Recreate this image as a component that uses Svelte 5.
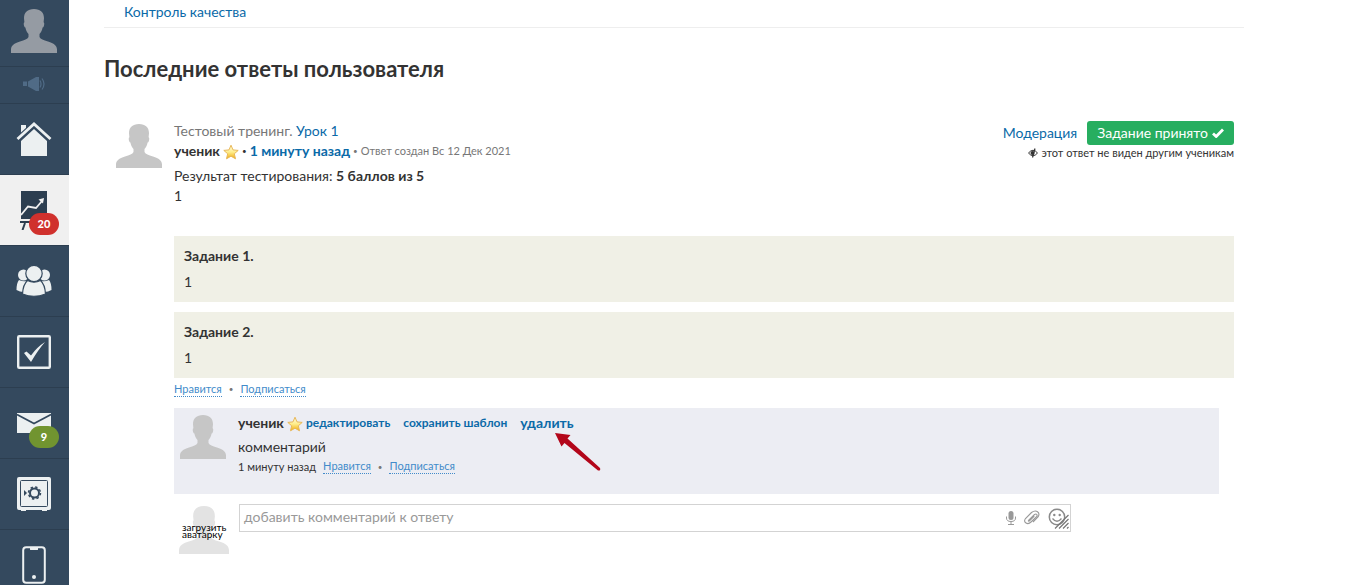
<script>
	const menu = [
		{ id: 'training', label: 'Тренинги', badge: 20, active: true },
		{ id: 'users', label: 'Ученики' },
		{ id: 'tasks', label: 'Задачи' },
		{ id: 'mail', label: 'Сообщения', badge: 9, green: true },
		{ id: 'safe', label: 'Продажи' },
		{ id: 'phone', label: 'Приложение' }
	];

	const tasks = [
		{ title: 'Задание 1.', answer: '1' },
		{ title: 'Задание 2.', answer: '1' }
	];

	let reply = $state('');
</script>

{#snippet person()}
	<svg class="person" viewBox="0 0 46 45" preserveAspectRatio="none" aria-hidden="true">
		<path d="M23 0c6.500 0 10 3.500 10 9.500l-.4 4c.9.300.8 2.500.2 4.200-.3.800-.7 1.200-1.200 1.300-.5 3-1.600 5-3.100 6.500v3.200c1 2.300 4 3.300 8.500 4.600 6 1.700 8.800 4.200 9 8.200V45H0v-3.500c.2-4 3-6.500 9-8.200 4.500-1.300 7.500-2.300 8.500-4.600v-3.200c-1.500-1.500-2.600-3.500-3.100-6.500-.5-.1-.9-.5-1.200-1.300-.6-1.700-.7-3.900.2-4.200l-.4-4C13 3.500 16.500 0 23 0z" />
	</svg>
{/snippet}

{#snippet star()}
	<svg class="star" viewBox="0 0 16 16" aria-hidden="true">
		<defs>
			<linearGradient id="gold" x1="0" y1="0" x2="0" y2="1">
				<stop offset="0" stop-color="#fffbe0" />
				<stop offset=".5" stop-color="#ffee8c" />
				<stop offset="1" stop-color="#efaa10" />
			</linearGradient>
		</defs>
		<path d="M8 1.200l2 4.700 5.200.5-3.900 3.400 1.200 5L8 12.200l-4.500 2.600 1.200-5L.8 6.400 6 5.900z" fill="url(#gold)" stroke="#e8b85a" stroke-linejoin="round" />
	</svg>
{/snippet}

<div class="page">
	<aside>
		<a class="profile" href="#profile" aria-label="Профиль">{@render person()}</a>
		<a class="news" href="#news" aria-label="Новости">
			<svg width="22" height="16" viewBox="0 0 22 16" fill="#506b86">
				<path d="M0 5.500h4v4.500H0zM5 5.500l8-4.500h3v14h-3l-8-4.500z" />
				<path d="M17 4.500q2 3.500 0 7M19 2.500q4 5.500 0 11" fill="none" stroke="#506b86" stroke-width="1.200" />
			</svg>
		</a>
		<a class="item" href="#home" aria-label="Главная">
			<svg width="36" height="36" viewBox="0 0 36 36" fill="#ecf0f1">
				<path d="M5 4h5v4l-5 5zM5 20L18 8l13 12v15H5z" />
				<path d="M1 18.500L18 3l17 15.500" fill="none" stroke="#34495e" stroke-width="5" />
				<path d="M1.500 18L18 3l16.500 15" fill="none" stroke="#ecf0f1" stroke-width="2.800" />
			</svg>
		</a>
		{#each menu as item}
			<a class="item" class:active={item.active} href={`#${item.id}`} aria-label={item.label}>
				{#if item.id === 'training'}
					<svg width="36" height="40" viewBox="0 0 36 40">
						<path d="M5 1h26v28H5zM4 31h28v2H4z" fill="#2c3e50" />
						<path d="M9 33l-2.500 7M27 33l2.500 7" stroke="#2c3e50" stroke-width="2" />
						<path d="M5 25l7-8.500 8 1.500 6-7" fill="none" stroke="#f0f0f0" stroke-width="1.800" />
						<path d="M28 8l-1 5.500-4.500-4z" fill="#f0f0f0" />
					</svg>
				{:else if item.id === 'users'}
					<svg width="36" height="32" viewBox="0 0 36 32" fill="#ecf0f1">
						<circle cx="7.500" cy="10" r="5.500" />
						<circle cx="28.500" cy="10" r="5.500" />
						<path d="M3 15q4 2 8 1L7.500 27Q4 27 .5 25 .5 18 3 15zM33 15q-4 2-8 1l3.500 11q3.500 0 7-2 0-7-2.500-10z" />
						<g stroke="#34495e" stroke-width="1.200">
							<circle cx="18" cy="8.500" r="8.200" />
							<path d="M11.500 15.500q6.500 3.500 13 0 4.500 4 5 13.500-11.500 4.500-23 0 .5-9.500 5-13.500z" />
						</g>
					</svg>
				{:else if item.id === 'tasks'}
					<svg width="34" height="34" viewBox="0 0 34 34">
						<rect x="1.200" y="1.200" width="31.600" height="31.600" rx="1" fill="none" stroke="#ecf0f1" stroke-width="2.400" />
						<path d="M7 18l2.500-1.500 4.500 4Q20 12 28 7q-7 8-14 20z" fill="#ecf0f1" />
					</svg>
				{:else if item.id === 'mail'}
					<svg class="mail" width="34" height="20" viewBox="0 0 34 20">
						<path d="M0 0h34v20H0z" fill="#ecf0f1" />
						<path d="M0 1.500l17 9 17-9" fill="none" stroke="#34495e" stroke-width="1.600" />
					</svg>
				{:else if item.id === 'safe'}
					<svg width="34" height="34" viewBox="0 0 34 34">
						<path d="M2 0h30q2 0 2 2v29q0 2-2 2h-2v1h-5v-1H9v1H4v-1H2q-2 0-2-2V2q0-2 2-2z" fill="#ecf0f1" />
						<g fill="none" stroke="#34495e">
							<rect x="3.500" y="3.500" width="27" height="26" rx="1" />
							<circle cx="17.500" cy="16" r="4.500" stroke-width="2" />
							<circle cx="17.500" cy="16" r="6" stroke-width="1.500" stroke-dasharray="2.400 2.300" />
						</g>
						<path d="M7 13l3 3-3 3z" fill="#34495e" />
					</svg>
				{:else}
					<svg width="24" height="38" viewBox="0 0 24 38">
						<rect x="1.200" y="1.200" width="21.600" height="35.600" rx="3" fill="none" stroke="#ecf0f1" stroke-width="2" />
						<path d="M8 1h8v2.500q0 .5-1 .5H9q-1 0-1-.5z" fill="#ecf0f1" />
						<circle cx="12" cy="31" r="2" fill="#ecf0f1" />
					</svg>
				{/if}
				{#if item.badge}
					<span class="badge" class:green={item.green}>{item.badge}</span>
				{/if}
			</a>
		{/each}
	</aside>

	<main>
		<nav class="tabs">
			<a href="#quality">Контроль качества</a>
		</nav>

		<h1>Последние ответы пользователя</h1>

		<article class="answer">
			<div class="avatar">{@render person()}</div>
			<div class="body">
				<header class="head">
					<div>
						<p class="lesson">Тестовый тренинг. <a href="#lesson">Урок 1</a></p>
						<p class="author">
							<b>ученик</b>{@render star()}<span class="dot">•</span>
							<a href="#answer"><b>1 минуту назад</b></a>
							<span class="dot grey">•</span>
							<small>Ответ создан Вс 12 Дек 2021</small>
						</p>
					</div>
					<div class="status">
						<div class="moderation">
							<a href="#moderation">Модерация</a>
							<button type="button">
								Задание принято
								<svg width="12" height="10" viewBox="0 0 12 10" aria-hidden="true">
									<path d="M1 5.500l3.200 3L11 1.500" fill="none" stroke="#fff" stroke-width="2.800" />
								</svg>
							</button>
						</div>
						<p class="hidden-note">
							<svg width="10" height="10" viewBox="0 0 10 10" aria-hidden="true">
								<path d="M.5 5Q5-.5 9.500 5 5 10.500.5 5z" fill="none" stroke="#333" />
								<circle cx="4.500" cy="5" r="2" fill="#333" />
								<path d="M7 .5L4.500 9.500" stroke="#333" stroke-width="1.200" />
							</svg>
							этот ответ не виден другим ученикам
						</p>
					</div>
				</header>

				<div class="result">
					<p>Результат тестирования: <b>5 баллов из 5</b></p>
					<p>1</p>
				</div>

				<div class="tasks">
					{#each tasks as task}
						<section class="task">
							<h2>{task.title}</h2>
							<p>{task.answer}</p>
						</section>
					{/each}
				</div>

				<p class="actions">
					<a href="#like">Нравится</a><span class="dot grey">•</span><a href="#subscribe">Подписаться</a>
				</p>

				<section class="comment">
					<div class="comment-avatar">{@render person()}</div>
					<div>
						<p class="comment-head">
							<b>ученик</b>{@render star()}
							<a href="#edit">редактировать</a>
							<a href="#template">сохранить шаблон</a>
							<a class="delete" href="#delete">
								удалить
								<svg class="arrow" width="46" height="38" viewBox="0 0 46 38" aria-hidden="true">
									<path d="M0 0l15.500 2-3 3.500L45 35q1 3-2 2.500L9.500 10l-3 3.500z" fill="#b3061a" />
								</svg>
							</a>
						</p>
						<p class="comment-text">комментарий</p>
						<p class="actions">
							<time>1 минуту назад</time><a href="#like-comment">Нравится</a><span class="dot grey">•</span><a href="#subscribe-comment">Подписаться</a>
						</p>
					</div>
				</section>

				<form class="reply">
					<a class="upload" href="#upload">
						{@render person()}
						<span>загрузить аватарку</span>
					</a>
					<div class="field">
						<textarea rows="1" bind:value={reply} aria-label="Комментарий" placeholder="добавить комментарий к ответу"></textarea>
						<div class="tools">
							<button type="button" aria-label="Записать голос">
								<svg width="10" height="14" viewBox="0 0 10 14">
									<rect x="2.500" y="0" width="5" height="9" rx="2.500" fill="#999" />
									<path d="M.5 5.500V7q0 3.500 4.500 3.500T9.500 7V5.500M5 10.500V13M2 13.500h6" fill="none" stroke="#999" />
								</svg>
							</button>
							<button type="button" aria-label="Прикрепить файл">
								<svg width="16" height="16" viewBox="0 0 16 16">
									<path d="M4.500 10.500l6-6q1.500-1 2.300 0t-.3 2.200L7 12q-2.500 2.500-5 1t-.5-4.500L7.500 2.500q3.500-2.500 6-.8t.7 5L9 12M4.500 10.500q-.5 1 .8.500l5-4.800" fill="none" stroke="#999" stroke-width="1.100" />
								</svg>
							</button>
							<button type="button" aria-label="Смайлы">
								<svg width="22" height="24" viewBox="0 0 22 24">
									<circle cx="9" cy="11" r="7.700" fill="none" stroke="#8a8a8a" stroke-width="1.500" />
									<circle cx="6.300" cy="9" r="1.200" fill="#8a8a8a" />
									<circle cx="11.700" cy="9" r="1.200" fill="#8a8a8a" />
									<path d="M4.500 12.500q4.500 5.500 9 0" fill="none" stroke="#8a8a8a" stroke-width="1.300" />
									<path d="M7 22.500L20.500 9M11 22.500l9.500-9.500M15 22.500l5.500-5.500M19 22.500l1.500-1.500" stroke="#777" stroke-width="1.200" />
								</svg>
							</button>
						</div>
					</div>
				</form>
			</div>
		</article>
	</main>
</div>

<style>
	:global(body) {
		background: #fff;
	}

	.page {
		display: flex;
		min-height: 100vh;
		max-height: 100vh;
		overflow: hidden;
		font: 14px/20px Lato, 'Liberation Sans', sans-serif;
		color: #333;
	}

	p,
	h1,
	h2 {
		margin: 0;
	}

	a {
		color: #0b6aa8;
		text-decoration: none;
	}

	svg {
		flex: none;
	}

	aside {
		flex: none;
		width: 69px;
		background: #34495e;
	}

	aside a {
		display: flex;
		align-items: center;
		justify-content: center;
		box-sizing: border-box;
		padding-right: 1px;
		border-bottom: 1px solid #2c3e50;
	}

	.person {
		display: block;
		width: 46px;
		height: 44px;
		fill: #c6c6c6;
	}

	.profile {
		height: 67px;
		padding-bottom: 4px;
	}

	.profile .person {
		fill: #959ba3;
	}

	.news {
		height: 37px;
		padding-bottom: 2px;
	}

	.item {
		position: relative;
		height: 71px;
	}

	.item.active {
		background: #f0f0f0;
	}

	.badge {
		position: absolute;
		left: 29px;
		top: 38px;
		width: 30px;
		border-radius: 11px;
		background: #d0312d;
		color: #fff;
		font-size: 11px;
		font-weight: 900;
		line-height: 22px;
		text-align: center;
	}

	.badge.green {
		background: #719430;
	}

	main {
		flex: 1;
		max-width: 1140px;
		padding: 0 35px;
	}

	.tabs {
		padding: 2px 20px 5px;
		border-bottom: 1px solid #eee;
	}

	h1 {
		margin: 26px 0 37px;
		font-size: 22px;
		line-height: 30px;
	}

	.answer {
		display: flex;
		padding: 0 10px;
	}

	.avatar {
		flex: none;
		width: 58px;
		padding: 3px 0 0 2px;
	}

	.body {
		flex: 1;
	}

	.head {
		display: flex;
		justify-content: space-between;
		height: 42px;
	}

	.lesson {
		color: #777;
	}

	.author {
		display: flex;
		gap: 3px;
	}

	.star {
		width: 16px;
		height: 16px;
		margin-top: 3px;
	}

	.dot {
		font-size: 8px;
	}

	.dot.grey {
		color: #777;
	}

	small {
		font-size: 11px;
		color: #777;
	}

	.moderation {
		display: flex;
		align-items: center;
		justify-content: flex-end;
		gap: 10px;
	}

	.moderation button {
		display: flex;
		align-items: center;
		gap: 4px;
		padding: 2px 10px;
		border: 0;
		border-radius: 3px;
		background: #27ae60;
		color: #fff;
		font: inherit;
	}

	.hidden-note {
		display: flex;
		align-items: center;
		justify-content: flex-end;
		gap: 3px;
		font-size: 11px;
		line-height: 16px;
	}

	.result {
		padding: 3px 0 30px;
	}

	.tasks {
		display: grid;
		gap: 10px;
	}

	.task {
		display: grid;
		gap: 6px;
		padding: 10px;
		background: #f0f0e6;
	}

	h2 {
		font-size: 14px;
		line-height: 20px;
	}

	.actions {
		display: flex;
		align-items: center;
		gap: 7px;
		height: 22px;
		font-size: 11px;
		line-height: 14px;
	}

	.actions a {
		border-bottom: 1px dotted #428bca;
		color: #428bca;
	}

	.comment {
		display: flex;
		gap: 12px;
		margin: 8px 15px 10px 0;
		padding: 5px 6px 18px;
		background: #ecedf3;
	}

	.comment .actions {
		height: 19px;
	}

	.comment-avatar {
		padding-top: 2px;
	}

	.comment-head {
		display: flex;
		gap: 3px;
	}

	.comment-head a {
		margin-right: 10px;
		font-size: 12px;
		font-weight: 700;
	}

	.comment-head .delete {
		position: relative;
		font-size: 14px;
	}

	.arrow {
		position: absolute;
		left: 35px;
		top: 20px;
	}

	.comment-text {
		padding: 4px 0 0;
	}

	.reply {
		display: flex;
		gap: 10px;
		padding-left: 5px;
	}

	.upload {
		position: relative;
		padding-top: 2px;
		color: #000;
	}

	.upload .person {
		width: 50px;
		height: 48px;
		fill: #e3e3e3;
	}

	.upload span {
		position: absolute;
		left: 3px;
		top: 20px;
		font-size: 10px;
		line-height: 7px;
	}

	.field {
		display: flex;
		flex: 1;
		box-sizing: border-box;
		height: 28px;
		max-width: 832px;
		border: 1px solid #d3d3d3;
	}

	textarea {
		flex: 1;
		padding: 2px 4px;
		border: 0;
		outline: 0;
		background: none;
		font: inherit;
		resize: none;
	}

	textarea::placeholder {
		color: #999;
	}

	.tools {
		display: flex;
		align-items: center;
		gap: 8px;
	}

	.tools button {
		display: flex;
		padding: 0;
		border: 0;
		background: none;
	}
</style>
